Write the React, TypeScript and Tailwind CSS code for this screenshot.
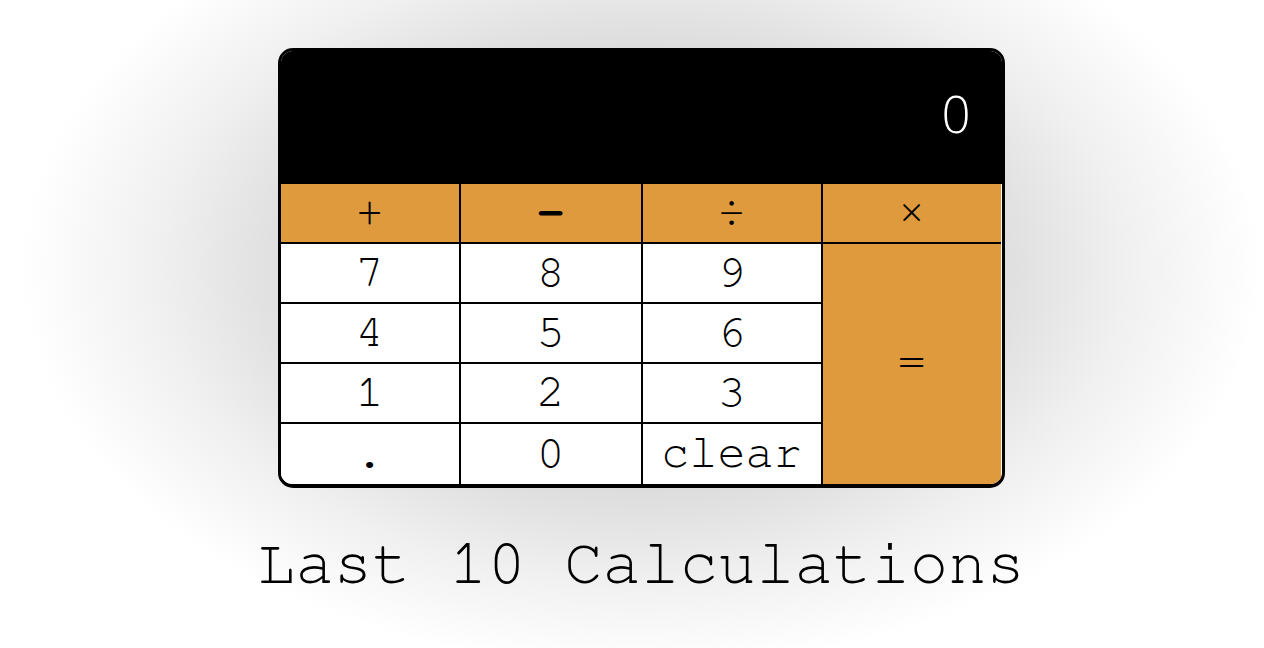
import React from 'react';

const mono = { fontFamily: '"Nimbus Mono PS", "Nimbus Mono L", FreeMono, Courier, "Courier New", "Liberation Mono", monospace' };

const ops = ['+', '−', '÷', '×'];
const rows = [
  ['7', '8', '9'],
  ['4', '5', '6'],
  ['1', '2', '3'],
  ['.', '0', 'clear'],
];

export default function App() {
  return (
    <div className="min-h-screen flex flex-col items-center pt-[48px] pl-[18px] overflow-hidden bg-[radial-gradient(ellipse_620px_400px_at_641px_268px,#cdcdcd_0%,#d5d5d5_45%,#e2e2e2_62%,#f0f0f0_78%,#ffffff_100%)]">
      <div className="w-[727px] rounded-[15px] border-[3px] border-b-4 border-black overflow-hidden bg-white">
        <div className="h-[133px] bg-black flex items-center justify-end pr-[31px] pb-[9px]">
          <span className="text-white text-[51px] font-light leading-none" style={{ fontFamily: '"Open Sans", sans-serif' }}>
            0
          </span>
        </div>
        <div className="grid grid-cols-[180px_182px_180px_178px]" style={mono}>
          {ops.map((op, i) => (
            <div
              key={op}
              className={`h-[60px] bg-[#df9a3e] border-b-2 border-black flex items-center justify-center pb-[3px] text-[46px] leading-none text-black ${
                i < 3 ? 'border-r-2' : ''
              } ${op === '−' ? 'font-bold text-[42px]' : ''}`}
            >
              {op}
            </div>
          ))}
          {rows.map((row, r) => (
            <React.Fragment key={r}>
              {row.map((k) => (
                <div
                  key={k}
                  className={`h-[60px] bg-white border-r-2 border-black flex items-center justify-center pb-[4px] text-[47px] leading-none text-black ${
                    r < 3 ? 'border-b-2' : ''
                  }`}
                >
                  {k}
                </div>
              ))}
              {r === 0 && (
                <div className="row-span-4 bg-[#df9a3e] flex items-center justify-center pb-[5px] text-[47px] leading-none text-black">
                  =
                </div>
              )}
            </React.Fragment>
          ))}
        </div>
      </div>
      <div className="mt-[44px] text-[64px] leading-none text-black whitespace-nowrap" style={mono}>
        Last 10 Calculations
      </div>
    </div>
  );
}
